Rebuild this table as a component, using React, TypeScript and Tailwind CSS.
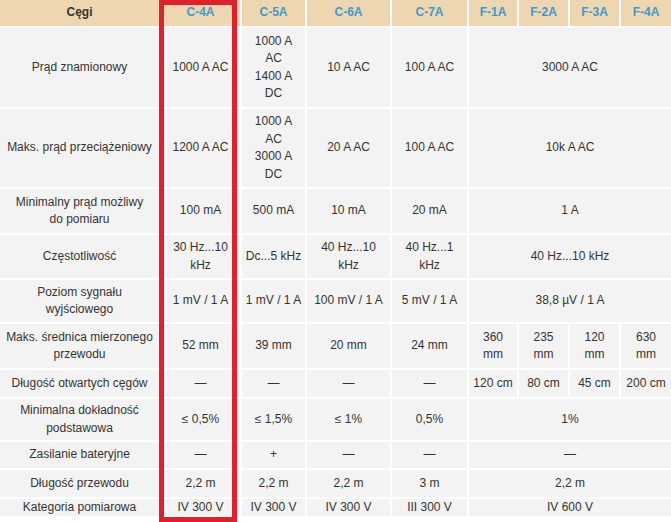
import React from "react";

type Cell = { t: string[]; span?: number };

const rows: { label: string[]; cells: Cell[] }[] = [
  {
    label: ["Prąd znamionowy"],
    cells: [
      { t: ["1000 A AC"] },
      { t: ["1000 A", "AC", "1400 A", "DC"] },
      { t: ["10 A AC"] },
      { t: ["100 A AC"] },
      { t: ["3000 A AC"], span: 4 },
    ],
  },
  {
    label: ["Maks. prąd przeciążeniowy"],
    cells: [
      { t: ["1200 A AC"] },
      { t: ["1000 A", "AC", "3000 A", "DC"] },
      { t: ["20 A AC"] },
      { t: ["100 A AC"] },
      { t: ["10k A AC"], span: 4 },
    ],
  },
  {
    label: ["Minimalny prąd możliwy", "do pomiaru"],
    cells: [
      { t: ["100 mA"] },
      { t: ["500 mA"] },
      { t: ["10 mA"] },
      { t: ["20 mA"] },
      { t: ["1 A"], span: 4 },
    ],
  },
  {
    label: ["Częstotliwość"],
    cells: [
      { t: ["30 Hz...10", "kHz"] },
      { t: ["Dc...5 kHz"] },
      { t: ["40 Hz...10", "kHz"] },
      { t: ["40 Hz...1", "kHz"] },
      { t: ["40 Hz...10 kHz"], span: 4 },
    ],
  },
  {
    label: ["Poziom sygnału", "wyjściowego"],
    cells: [
      { t: ["1 mV / 1 A"] },
      { t: ["1 mV / 1 A"] },
      { t: ["100 mV / 1 A"] },
      { t: ["5 mV / 1 A"] },
      { t: ["38,8 µV / 1 A"], span: 4 },
    ],
  },
  {
    label: ["Maks. średnica mierzonego", "przewodu"],
    cells: [
      { t: ["52 mm"] },
      { t: ["39 mm"] },
      { t: ["20 mm"] },
      { t: ["24 mm"] },
      { t: ["360", "mm"] },
      { t: ["235", "mm"] },
      { t: ["120", "mm"] },
      { t: ["630", "mm"] },
    ],
  },
  {
    label: ["Długość otwartych cęgów"],
    cells: [
      { t: ["—"] },
      { t: ["—"] },
      { t: ["—"] },
      { t: ["—"] },
      { t: ["120 cm"] },
      { t: ["80 cm"] },
      { t: ["45 cm"] },
      { t: ["200 cm"] },
    ],
  },
  {
    label: ["Minimalna dokładność", "podstawowa"],
    cells: [
      { t: ["≤ 0,5%"] },
      { t: ["≤ 1,5%"] },
      { t: ["≤ 1%"] },
      { t: ["0,5%"] },
      { t: ["1%"], span: 4 },
    ],
  },
  {
    label: ["Zasilanie bateryjne"],
    cells: [
      { t: ["—"] },
      { t: ["+"] },
      { t: ["—"] },
      { t: ["—"] },
      { t: ["—"], span: 4 },
    ],
  },
  {
    label: ["Długość przewodu"],
    cells: [
      { t: ["2,2 m"] },
      { t: ["2,2 m"] },
      { t: ["2,2 m"] },
      { t: ["3 m"] },
      { t: ["2,2 m"], span: 4 },
    ],
  },
  {
    label: ["Kategoria pomiarowa"],
    cells: [
      { t: ["IV 300 V"] },
      { t: ["IV 300 V"] },
      { t: ["IV 300 V"] },
      { t: ["III 300 V"] },
      { t: ["IV 600 V"], span: 4 },
    ],
  },
];

const models = ["C-4A", "C-5A", "C-6A", "C-7A", "F-1A", "F-2A", "F-3A", "F-4A"];

function Lines({ t }: { t: string[] }) {
  return (
    <div className="whitespace-nowrap">
      {t.map((l, i) => (
        <div key={i}>{l}</div>
      ))}
    </div>
  );
}

export default function App() {
  return (
    <div className="relative w-[671px] h-[522px] overflow-hidden bg-white font-['Liberation_Sans',Arial,sans-serif] text-[12px] leading-[17.5px] text-[#333333]">
      <div className="grid grid-cols-[159px_79px_63px_83px_75px_48px_49px_49px_50px] grid-rows-[26px_79px_78px_44px_43px_42px_44px_27px_41px_26px_27px_17px] gap-[2px] bg-white">
        <div className="flex items-center justify-center bg-[#eed6b0] font-bold text-[#333333]">
          Cęgi
        </div>
        {models.map((m) => (
          <div
            key={m}
            className="flex items-center justify-center bg-[#eed6b0] font-bold text-[#3b9bd0]"
          >
            {m}
          </div>
        ))}
        {rows.map((r, ri) => (
          <React.Fragment key={ri}>
            <div className="flex items-center justify-center text-center bg-[#f3f3f3]">
              <Lines t={r.label} />
            </div>
            {r.cells.map((c, ci) => (
              <div
                key={ci}
                className={`flex items-center justify-center text-center bg-[#f3f3f3] ${
                  c.span === 4 ? "col-span-4" : ""
                }`}
              >
                <Lines t={c.t} />
              </div>
            ))}
          </React.Fragment>
        ))}
      </div>
      <div className="absolute left-[159px] top-0 w-[78px] h-[522px] border-[5px] border-[#e0202b]" />
    </div>
  );
}
